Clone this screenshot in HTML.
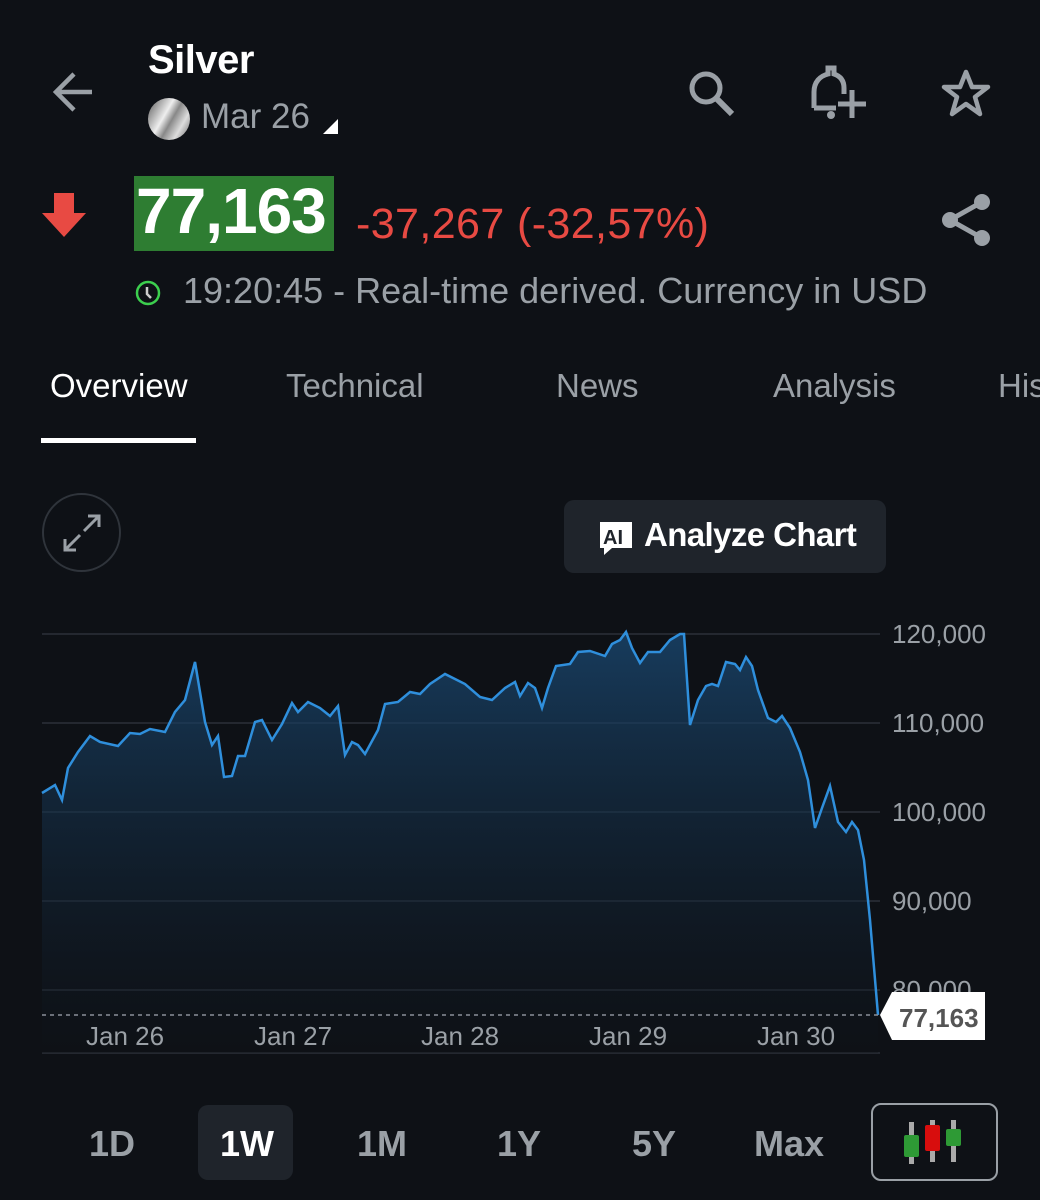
<!DOCTYPE html>
<html><head><meta charset="utf-8"><style>
*{margin:0;padding:0;box-sizing:border-box}
html,body{width:1040px;height:1200px;overflow:hidden}
body{background:#0e1116;font-family:"Liberation Sans",sans-serif;position:relative;color:#fff}
.a{position:absolute;white-space:nowrap}
</style></head><body>
<svg class="a" style="left:50px;top:68px" width="48" height="48" viewBox="0 0 48 48"><path d="M42 24H8M24 6L6 24l18 18" stroke="#9aa0a6" stroke-width="4.5" fill="none"/></svg>
<div class="a" style="left:148px;top:38px;font-size:40px;font-weight:bold;letter-spacing:-0.5px">Silver</div>
<div class="a" style="left:148px;top:98px;width:42px;height:42px;border-radius:50%;background:linear-gradient(120deg,#555 0%,#eee 40%,#888 55%,#ddd 75%,#666 100%)"></div>
<div class="a" style="left:201px;top:97px;font-size:35px;color:#9aa0a6">Mar 26</div>
<svg class="a" style="left:322px;top:119px" width="18" height="16"><path d="M16 0V15H1Z" fill="#fff"/></svg>
<svg class="a" style="left:684px;top:66px" width="54" height="54" viewBox="0 0 54 54"><circle cx="22" cy="22" r="14" stroke="#9aa0a6" stroke-width="5" fill="none"/><path d="M32 32L48 48" stroke="#9aa0a6" stroke-width="6"/></svg>
<svg class="a" style="left:806px;top:64px" width="64" height="60" viewBox="0 0 64 60"><path d="M8 44V28C8 18 14 12 22 10V4h6v6C34 12 38 16 38 24V30M8 44H30" stroke="#9aa0a6" stroke-width="5" fill="none"/><circle cx="25" cy="51" r="4" fill="#9aa0a6"/><path d="M46 26V54M32 40H60" stroke="#9aa0a6" stroke-width="5"/></svg>
<svg class="a" style="left:940px;top:68px" width="52" height="52" viewBox="0 0 52 52"><path d="M26 4L32 19H48L35 29L40 46L26 36L12 46L17 29L4 19H20Z" stroke="#9aa0a6" stroke-width="4.5" fill="none" stroke-linejoin="round"/></svg>
<svg class="a" style="left:40px;top:193px" width="48" height="46"><path d="M14 0H34V20H46L24 44L2 20H14Z" fill="#e84a43"/></svg>
<div class="a" style="left:134px;top:176px;width:200px;height:75px;background:#2e7d32"></div>
<div class="a" style="left:136px;top:174px;font-size:64px;font-weight:bold;color:#fff;letter-spacing:-1px">77,163</div>
<div class="a" style="left:356px;top:200px;font-size:43px;color:#e84a43;letter-spacing:0.4px">-37,267 (-32,57%)</div>
<svg class="a" style="left:940px;top:192px" width="52" height="56" viewBox="0 0 52 56"><circle cx="42" cy="10" r="8" fill="#9aa0a6"/><circle cx="10" cy="28" r="8" fill="#9aa0a6"/><circle cx="42" cy="46" r="8" fill="#9aa0a6"/><path d="M42 10L10 28L42 46" stroke="#9aa0a6" stroke-width="5" fill="none"/></svg>
<svg class="a" style="left:134px;top:279px" width="28" height="28"><circle cx="14" cy="14" r="11" stroke="#3ccf4e" stroke-width="2.5" fill="none"/><path d="M13 8V15L17 19" stroke="#ccc" stroke-width="2.5" fill="none"/></svg>
<div class="a" style="left:183px;top:270px;font-size:36px;color:#9aa0a6">19:20:45 - Real-time derived. Currency in USD</div>
<div class="a" style="left:50px;top:367px;font-size:33px;color:#fff">Overview</div>
<div class="a" style="left:286px;top:367px;font-size:33px;color:#9aa0a6">Technical</div>
<div class="a" style="left:556px;top:367px;font-size:33px;color:#9aa0a6">News</div>
<div class="a" style="left:773px;top:367px;font-size:33px;color:#9aa0a6">Analysis</div>
<div class="a" style="left:998px;top:367px;width:42px;overflow:hidden;font-size:33px;color:#9aa0a6">History</div>
<div class="a" style="left:41px;top:438px;width:155px;height:5px;background:#fff"></div>
<div class="a" style="left:42px;top:493px;width:79px;height:79px;border-radius:50%;border:2px solid #2f343b"></div>
<svg class="a" style="left:62px;top:513px" width="40" height="40"><path d="M22 18L37 3M26 3H37V14M18 22L3 37M3 26V37H14" stroke="#9aa0a6" stroke-width="3" fill="none"/></svg>
<div class="a" style="left:564px;top:500px;width:322px;height:73px;border-radius:10px;background:#1f242b"></div>
<svg class="a" style="left:598px;top:520px" width="36" height="36"><path d="M2 2H34V28H14L6 35V28H2Z" fill="#fff"/><text x="5" y="24" font-family="Liberation Sans" font-weight="bold" font-size="20" fill="#1f242b">AI</text></svg>
<div class="a" style="left:644px;top:516px;font-size:33px;font-weight:bold;color:#fff;letter-spacing:-0.6px">Analyze Chart</div>
<svg class="a" style="left:0;top:600px" width="1040" height="470">
<defs><linearGradient id="g" x1="0" y1="0" x2="0" y2="1"><stop offset="0" stop-color="#1a4a75" stop-opacity="0.75"/><stop offset="1" stop-color="#0e1116" stop-opacity="0.3"/></linearGradient></defs>
<g stroke="#2b3139" stroke-width="1.5"><path d="M42 34H880M42 123H880M42 212H880M42 301H880M42 390H880M42 453H880"/></g>
<path d="M42 193L55 185L62 200L68 168L78 152L90 136L100 142L118 146L130 133L140 134L150 129L165 132L175 112L185 100L195 62L205 122L212 145L218 136L224 177L232 176L238 156L245 156L255 122L262 120L272 140L282 124L292 103L298 112L308 102L320 108L330 116L338 106L345 155L352 142L358 145L365 154L378 130L385 104L398 102L410 92L420 94L430 84L445 74L465 84L480 97L492 100L505 88L515 82L520 96L528 83L535 88L542 108L548 88L556 66L570 64L578 52L590 51L605 56L612 44L620 40L626 32L632 48L640 63L648 52L660 52L670 40L680 34L684 34L690 125L698 100L706 86L712 84L718 86L726 62L735 64L740 70L746 57L752 66L758 90L768 118L776 122L782 116L790 128L800 152L808 180L815 228L822 208L830 186L838 222L846 232L852 222L858 230L864 260L870 320L878 415L878 453L42 453Z" fill="url(#g)"/>
<path d="M42 193L55 185L62 200L68 168L78 152L90 136L100 142L118 146L130 133L140 134L150 129L165 132L175 112L185 100L195 62L205 122L212 145L218 136L224 177L232 176L238 156L245 156L255 122L262 120L272 140L282 124L292 103L298 112L308 102L320 108L330 116L338 106L345 155L352 142L358 145L365 154L378 130L385 104L398 102L410 92L420 94L430 84L445 74L465 84L480 97L492 100L505 88L515 82L520 96L528 83L535 88L542 108L548 88L556 66L570 64L578 52L590 51L605 56L612 44L620 40L626 32L632 48L640 63L648 52L660 52L670 40L680 34L684 34L690 125L698 100L706 86L712 84L718 86L726 62L735 64L740 70L746 57L752 66L758 90L768 118L776 122L782 116L790 128L800 152L808 180L815 228L822 208L830 186L838 222L846 232L852 222L858 230L864 260L870 320L878 415" stroke="#2f8fdc" stroke-width="2.5" fill="none"/>
<path d="M42 415H878" stroke="#8a9099" stroke-width="1.5" stroke-dasharray="4 4"/>
<g font-family="Liberation Sans" font-size="26" fill="#9aa0a6"><text x="892" y="43">120,000</text><text x="892" y="132">110,000</text><text x="892" y="221">100,000</text><text x="892" y="310">90,000</text><text x="892" y="399">80,000</text>
<text x="86" y="445">Jan 26</text><text x="254" y="445">Jan 27</text><text x="421" y="445">Jan 28</text><text x="589" y="445">Jan 29</text><text x="757" y="445">Jan 30</text></g>
<path d="M880 415L892 392H985V440H892Z" fill="#fff"/>
<text x="899" y="427" font-family="Liberation Sans" font-size="26" font-weight="bold" fill="#555">77,163</text>
</svg>
<div class="a" style="left:198px;top:1105px;width:95px;height:75px;border-radius:10px;background:#1f242b"></div>
<div class="a" style="left:89px;top:1123px;font-size:36px;font-weight:bold;color:#9aa0a6">1D</div>
<div class="a" style="left:220px;top:1123px;font-size:36px;font-weight:bold;color:#fff">1W</div>
<div class="a" style="left:357px;top:1123px;font-size:36px;font-weight:bold;color:#9aa0a6">1M</div>
<div class="a" style="left:497px;top:1123px;font-size:36px;font-weight:bold;color:#9aa0a6">1Y</div>
<div class="a" style="left:632px;top:1123px;font-size:36px;font-weight:bold;color:#9aa0a6">5Y</div>
<div class="a" style="left:754px;top:1123px;font-size:36px;font-weight:bold;color:#9aa0a6">Max</div>
<div class="a" style="left:871px;top:1103px;width:127px;height:78px;border-radius:10px;border:2.5px solid #9aa0a6"></div>
<svg class="a" style="left:900px;top:1118px" width="70" height="50">
<g fill="#aaa"><rect x="30" y="2" width="5" height="42"/><rect x="51" y="2" width="5" height="42"/><rect x="9" y="4" width="5" height="42"/></g>
<rect x="4" y="17" width="15" height="22" rx="2" fill="#2e9a35"/><rect x="25" y="7" width="15" height="26" rx="2" fill="#d80d0d"/><rect x="46" y="11" width="15" height="17" rx="2" fill="#2e9a35"/></svg>
</body></html>
